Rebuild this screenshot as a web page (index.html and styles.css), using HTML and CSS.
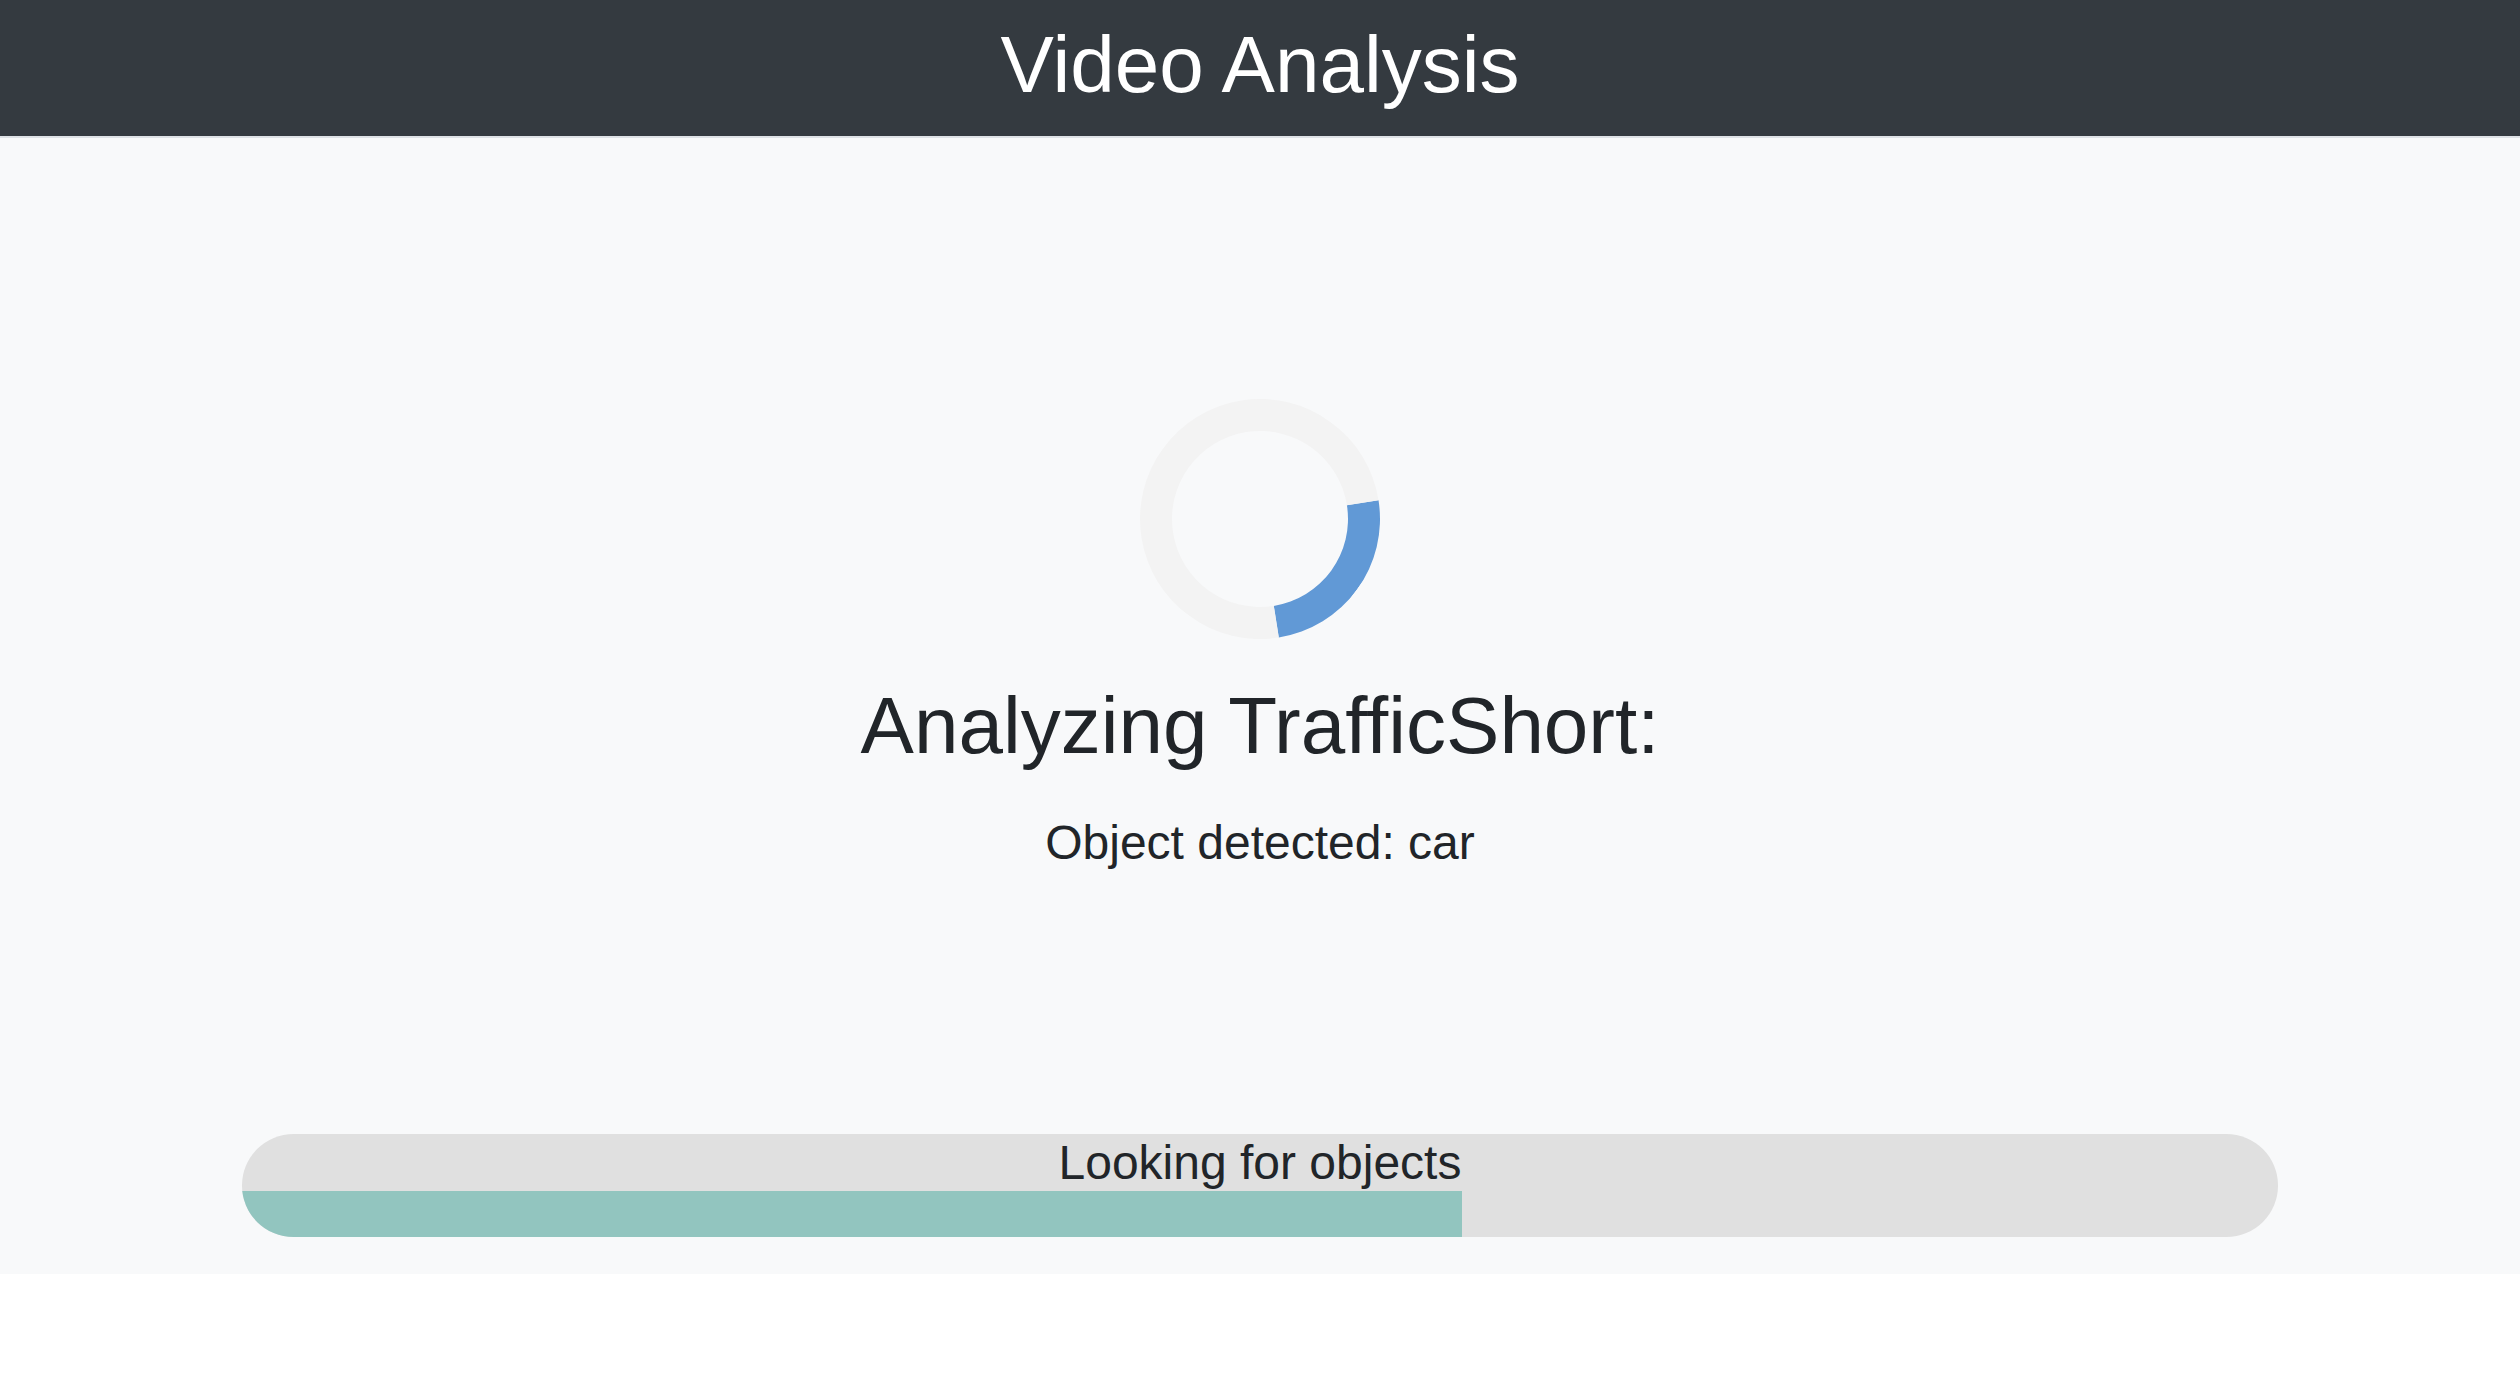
FILE: index.html
```html
<!DOCTYPE html>
<html lang="en">
<head>
<meta charset="utf-8">
<title>Video Analysis</title>
<link rel="stylesheet" href="styles.css">
</head>
<body>
<header class="topbar">
  <h1 class="topbar-title">Video Analysis</h1>
</header>
<main class="analysis">
  <div class="spinner" aria-hidden="true"></div>
  <h2 class="analysis-title">Analyzing TrafficShort:</h2>
  <p class="analysis-detail">Object detected: car</p>
  <div class="progress">
    <div class="progress-label">Looking for objects</div>
    <div class="progress-fill" style="width: 59.9%"></div>
  </div>
</main>
</body>
</html>
```

FILE: styles.css
```css
* {
  box-sizing: border-box;
}

html, body {
  margin: 0;
  padding: 0;
  background: #ffffff;
  font-family: "Liberation Sans", Arial, sans-serif;
  color: #212529;
}

.topbar {
  height: 138px;
  background: #343a40;
  border-bottom: 2px solid #dee2e6;
  padding-top: 17px;
}

.topbar-title {
  margin: 0;
  text-align: center;
  color: #ffffff;
  font-size: 80px;
  font-weight: 400;
  line-height: 96px;
}

.analysis {
  background: #f8f9fa;
  display: flex;
  flex-direction: column;
  align-items: center;
  padding: 261px 0 37px;
}

.spinner {
  width: 240px;
  height: 240px;
  border: 32px solid #f3f3f3;
  border-top-color: #6199d6;
  border-radius: 50%;
  transform: rotate(126deg);
}

.analysis-title {
  margin: 39px 0 0;
  font-size: 80px;
  font-weight: 400;
  line-height: 96px;
  text-align: center;
}

.analysis-detail {
  margin: 40px 0 0;
  font-size: 48px;
  line-height: 57.6px;
  text-align: center;
}

.progress {
  margin-top: 262px;
  width: calc(100% - 484px);
  background: #e0e0e0;
  border-radius: 52px;
  overflow: hidden;
}

.progress-label {
  font-size: 48px;
  line-height: 57px;
  text-align: center;
}

.progress-fill {
  height: 46px;
  background: #92c5bf;
}
```
